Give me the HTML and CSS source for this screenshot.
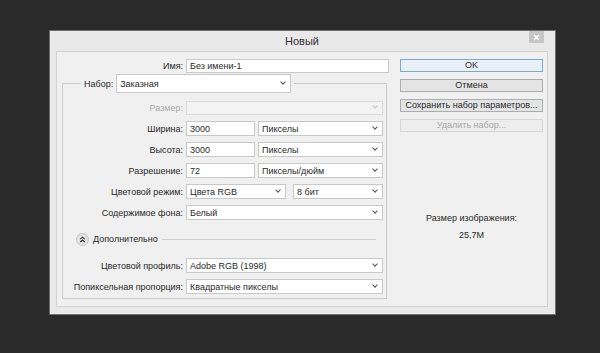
FILE: index.html
```html
<!DOCTYPE html>
<html lang="ru">
<head>
  <meta charset="UTF-8">
  <title>Новый</title>
  <link rel="stylesheet" href="styles.css">
</head>
<body>
  <div class="dialog">
    <div class="titlebar">
      <span></span>
      <div class="title">Новый</div>
      <div class="close">
        <svg width="7" height="7" viewBox="0 0 7 7"><path d="M1 1l5 5M6 1l-5 5" stroke="#fff" stroke-width="1.4"/></svg>
      </div>
    </div>
    <div class="client">
      <div class="left">
        <div class="name-row">
          <label class="lbl">Имя:</label>
          <input class="field name" type="text" value="Без имени-1">
        </div>
        <fieldset class="group">
          <legend class="preset">
            <span class="preset-lbl">Набор:</span>
            <div class="select preset-select"><span>Заказная</span></div>
          </legend>
          <div class="rows">
            <label class="lbl disabled">Размер:</label>
            <div class="select off"><span></span></div>

            <label class="lbl">Ширина:</label>
            <div class="pair">
              <input class="field" type="text" value="3000">
              <div class="select"><span>Пикселы</span></div>
            </div>

            <label class="lbl">Высота:</label>
            <div class="pair">
              <input class="field" type="text" value="3000">
              <div class="select"><span>Пикселы</span></div>
            </div>

            <label class="lbl">Разрешение:</label>
            <div class="pair">
              <input class="field" type="text" value="72">
              <div class="select"><span>Пикселы/дюйм</span></div>
            </div>

            <label class="lbl">Цветовой режим:</label>
            <div class="pair mode">
              <div class="select"><span>Цвета RGB</span></div>
              <div class="select"><span>8 бит</span></div>
            </div>

            <label class="lbl">Содержимое фона:</label>
            <div class="select"><span>Белый</span></div>
          </div>

          <div class="advanced">
            <svg class="expand" width="13" height="13" viewBox="0 0 13 13">
              <circle cx="6.5" cy="6.5" r="6" fill="#e2e2e2" stroke="#c4c4c4"/>
              <path d="M4.3 6.2l2.2-2 2.2 2M4.3 9l2.2-2 2.2 2" fill="none" stroke="#333" stroke-width="1.1"/>
            </svg>
            <span class="adv-text">Дополнительно</span>
            <div class="adv-line"></div>
          </div>

          <div class="rows">
            <label class="lbl">Цветовой профиль:</label>
            <div class="select"><span>Adobe RGB (1998)</span></div>

            <label class="lbl">Попиксельная пропорция:</label>
            <div class="select"><span>Квадратные пикселы</span></div>
          </div>
        </fieldset>
      </div>

      <div class="right">
        <button class="btn default">OK</button>
        <button class="btn">Отмена</button>
        <button class="btn">Сохранить набор параметров...</button>
        <button class="btn" disabled>Удалить набор...</button>
        <div class="info">
          <div>Размер изображения:</div>
          <div>25,7M</div>
        </div>
      </div>
    </div>
  </div>
</body>
</html>
```

FILE: styles.css
```css
html, body { height: 100%; }
body {
  margin: 0;
  background: #2a2a2a;
  font-family: "Liberation Sans", Arial, sans-serif;
  font-size: 9px;
  color: #2a2a2a;
  padding: 30px 0 0 49px;
  box-sizing: border-box;
  overflow: hidden;
}

.dialog {
  width: 507px;
  height: 285px;
  box-sizing: border-box;
  border: 1px solid #6f6f6f;
  background: #e9e9e9;
  padding: 0 7px 7px 6px;
  display: flex;
  flex-direction: column;
}

.titlebar { height: 20px; display: grid; grid-template-columns: 1fr auto 1fr; align-items: center; }
.title { font-size: 11px; color: #333; margin-top: -1px; }
.close {
  justify-self: end;
  align-self: start;
  width: 15px;
  height: 12px;
  margin-right: 4px;
  background: #c6c6c6;
  display: flex;
  align-items: center;
  justify-content: center;
}

.client {
  flex: 1;
  background: #f0f0f0;
  border: 1px solid #d2d2d2;
  display: flex;
  gap: 11px;
  padding: 7px 4px 0 5px;
}

.left { width: 327px; }

.lbl { text-align: right; white-space: nowrap; }
.lbl.disabled { color: #ababab; }

.name-row { display: flex; align-items: center; height: 14px; }
.name-row .lbl { width: 121px; margin-right: 3px; }

.field {
  height: 15px;
  box-sizing: border-box;
  border: 1px solid #c8c8c8;
  background: #fff;
  padding: 0 3px;
  margin: 0;
  font: inherit;
  color: #2a2a2a;
  outline: none;
  min-width: 0;
}
.field.name { width: 203px; height: 14px; }

.select {
  height: 15px;
  box-sizing: border-box;
  border: 1px solid #c8c8c8;
  background: #fff;
  padding: 0 5px 0 3px;
  display: flex;
  align-items: center;
  justify-content: space-between;
  white-space: nowrap;
}
.select::after {
  content: "";
  width: 3px;
  height: 3px;
  border-right: 1.3px solid #555;
  border-bottom: 1.3px solid #555;
  transform: rotate(45deg);
  margin-top: -3px;
}
.select.off { background: #f3f3f3; border-color: #dcdcdc; height: 14px; }
.select.off::after { border-color: #c2c2c2; }

.group {
  margin: 1px 2px 0 0;
  padding: 7px 3px 4px 0;
  border: 1px solid #cdcdcd;
  min-width: 0;
}
.preset { margin-left: 18px; padding: 0 3px; display: flex; align-items: center; gap: 3px; }
.preset-lbl { white-space: nowrap; }
.preset-select { width: 175px; height: 19px; }

.rows {
  display: grid;
  grid-template-columns: 120px 197px;
  column-gap: 3px;
  row-gap: 6px;
  grid-auto-rows: 15px;
  align-items: center;
}

.pair { display: grid; grid-template-columns: 69px 1fr; gap: 3px; }
.pair.mode { grid-template-columns: 100px 1fr; gap: 7px; }

.advanced { display: flex; align-items: center; height: 14px; margin: 12px 7px 12px 13px; }
.adv-text { margin-left: 4px; }
.adv-line { flex: 1; height: 1px; background: #cfcfcf; margin-left: 4px; }

.right { width: 143px; display: flex; flex-direction: column; gap: 7px; }
.btn {
  height: 13px;
  box-sizing: border-box;
  border: 1px solid #adadad;
  background: #e4e4e4;
  font: inherit;
  color: #2a2a2a;
  padding: 0;
  line-height: 11px;
  white-space: nowrap;
}
.btn.default { border-color: #7ea9d6; background: #e8f0f8; }
.btn:disabled { border-color: #d6d6d6; background: #ededed; color: #a6a6a6; }

.info { margin-top: 71px; text-align: center; line-height: 17px; }
```
